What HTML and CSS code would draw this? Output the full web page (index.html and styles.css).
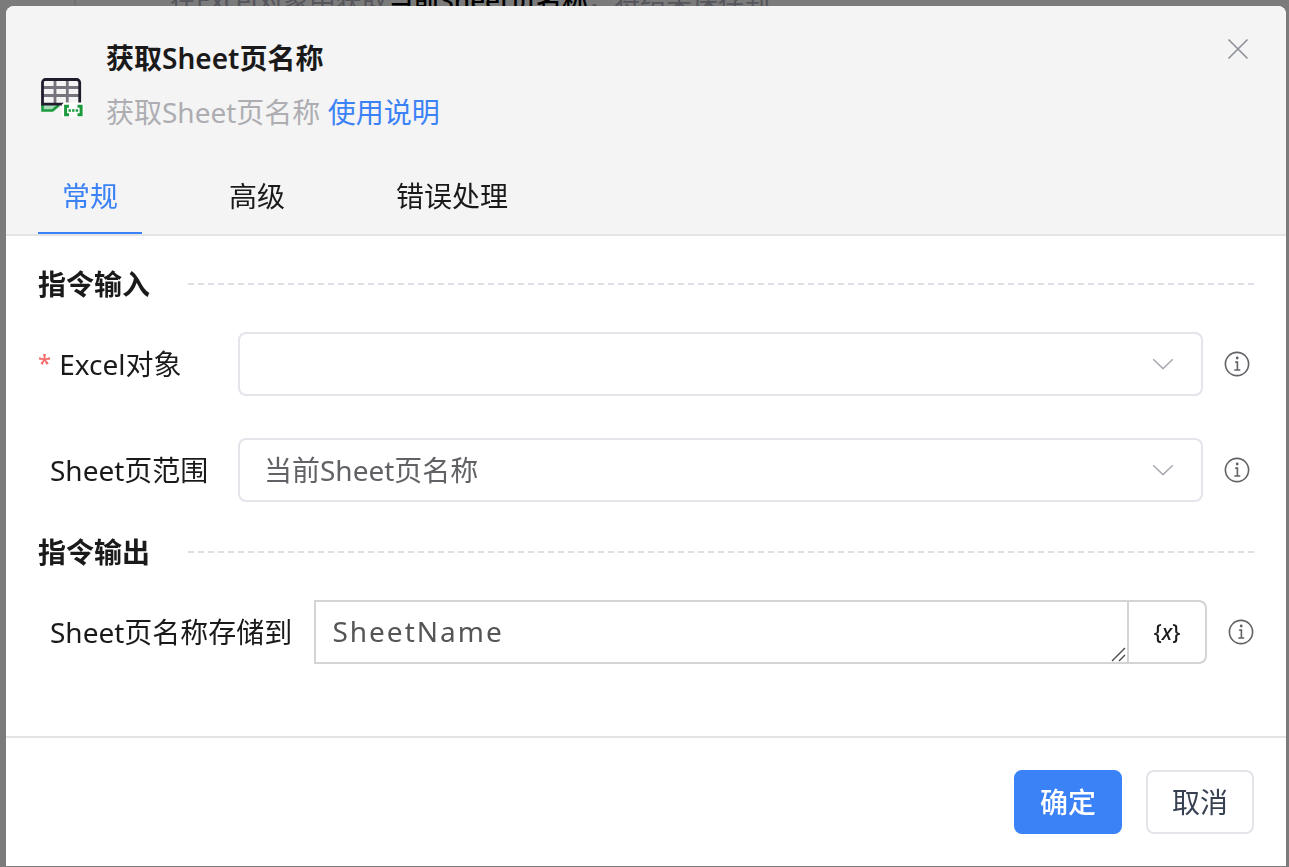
FILE: index.html
```html
<!DOCTYPE html>
<html lang="zh-CN">
<head>
<meta charset="utf-8">
<title>获取Sheet页名称</title>
<link rel="stylesheet" href="styles.css">
</head>
<body>
<svg class="sprite" aria-hidden="true">
  <symbol id="info" viewBox="0 0 26 26">
    <circle cx="13" cy="13" r="11.6" fill="none" stroke="currentColor" stroke-width="1.6"/>
    <circle cx="13.2" cy="7" r="1.4" fill="currentColor"/>
    <path d="M11.2 11.1h2.2v7.8M10.3 19h6" fill="none" stroke="currentColor" stroke-width="1.6"/>
  </symbol>
  <symbol id="chevron" viewBox="0 0 22 12">
    <path d="M1.2 1.2 11 10.6 20.8 1.2" fill="none" stroke="currentColor" stroke-width="1.5"/>
  </symbol>
</svg>

<div class="flow">
  <div class="flow-gutter"></div>
  <p class="flow-step">在Excel对象中获取<b>当前Sheet页名称</b>，将结果保存到</p>
</div>

<div class="overlay">
  <form class="dialog" role="dialog" aria-labelledby="dialog-title">
    <header class="dialog-header">
      <div class="heading">
        <svg class="command-icon" viewBox="0 0 44 40" aria-hidden="true">
          <path d="M2.500 27v6.500H12.500L19 28" fill="#a9dcb8" stroke="#1a9a3c" stroke-width="2.600"/>
          <path d="M3 3h36v24H3z" fill="#f4f4f4"/>
          <path d="M3 10.500h36M3 18.500h36M15 3v24M27.300 3v24" fill="none" stroke="#78727d" stroke-width="2.800"/>
          <path d="M39.700 26V5.500a3 3 0 0 0-3-3H5.500a3 3 0 0 0-3 3v21.700h21" fill="none" stroke="#211c2c" stroke-width="2.800"/>
          <path d="M24 25.500h18l2 2V40H22V27.500z" fill="#fff"/>
          <path d="M29 29.300h-3.400v8.400H29M37.500 29.300h3.600v8.400h-3.600" fill="none" stroke="#1a9a3c" stroke-width="3"/>
          <path d="M28.500 33.500h2.400M32.100 33.500h2.400M35.700 33.500h2.400" stroke="#1a9a3c" stroke-width="2.600"/>
        </svg>
        <div class="heading-text">
          <h1 id="dialog-title">获取Sheet页名称</h1>
          <p>获取Sheet页名称 <a href="#help">使用说明</a></p>
        </div>
        <button class="close" type="button" aria-label="关闭">
          <svg viewBox="0 0 22 22"><path d="m1.500 1.500 19 19m0-19-19 19" fill="none" stroke="currentColor" stroke-width="1.600"/></svg>
        </button>
      </div>
      <nav class="tabs" role="tablist">
        <button class="tab active" type="button" role="tab" aria-selected="true">常规</button>
        <button class="tab" type="button" role="tab" aria-selected="false">高级</button>
        <button class="tab" type="button" role="tab" aria-selected="false">错误处理</button>
      </nav>
    </header>

    <main class="dialog-body">
      <h2>指令输入</h2>
      <div class="fields">
        <div class="field">
          <label class="required" for="excel">Excel对象</label>
          <div class="select">
            <select id="excel" required><option value=""></option></select>
            <svg><use href="#chevron"/></svg>
          </div>
          <svg class="info"><use href="#info"/></svg>
        </div>
        <div class="field">
          <label for="scope">Sheet页范围</label>
          <div class="select">
            <select id="scope"><option>当前Sheet页名称</option></select>
            <svg><use href="#chevron"/></svg>
          </div>
          <svg class="info"><use href="#info"/></svg>
        </div>
      </div>
      <h2>指令输出</h2>
      <div class="field output">
        <label for="target">Sheet页名称存储到</label>
        <div class="variable">
          <textarea id="target" rows="1">SheetName</textarea>
          <svg class="grip" viewBox="0 0 16 16" aria-hidden="true"><path d="M1 15 14 2M8 15l6-6" stroke="#4a4a4a" stroke-width="1.400"/></svg>
          <button type="button" aria-label="插入变量">{<i>x</i>}</button>
        </div>
        <svg class="info"><use href="#info"/></svg>
      </div>
    </main>

    <footer class="dialog-footer">
      <button class="primary" type="submit">确定</button>
      <button type="button">取消</button>
    </footer>
  </form>
</div>
</body>
</html>
```
FILE: styles.css
```css
* { box-sizing: border-box; }

body,
button,
select,
textarea {
  font-family: "Noto Sans", "Noto Sans CJK SC", sans-serif;
  font-size: 28px;
  line-height: 40px;
}

body {
  margin: 0;
  min-height: 100vh;
  overflow: hidden;
  background: #7b7b7b;
  color: #1a1a1a;
}

h1, h2, p { margin: 0; }

button {
  margin: 0;
  padding: 0;
  border: 0;
  background: none;
  color: inherit;
  cursor: pointer;
}

.sprite { position: absolute; width: 0; height: 0; }

.flow {
  display: flex;
  margin-top: -20px;
  color: #55555c;
}

.flow-gutter {
  width: 76px;
  margin-right: 94px;
  border-right: 2px solid #727272;
}

.flow-step { font-size: 26px; white-space: nowrap; }

.flow-step b { color: #000; font-weight: 500; }

.overlay {
  position: fixed;
  inset: 0;
  display: flex;
  padding: 6px 3px 1px 6px;
}

.dialog {
  flex: 1;
  display: flex;
  flex-direction: column;
  overflow: hidden;
  border-radius: 8px 8px 0 0;
  background: #fff;
}

.dialog-header {
  padding: 32px 32px 0;
  border-bottom: 2px solid #e4e4e4;
  background: #f4f4f4;
}

.heading { display: flex; }

.command-icon {
  width: 44px;
  height: 40px;
  margin: 39px 22px 0 2px;
}

.heading-text {
  flex: 1;
  display: grid;
  gap: 14px;
}

h1 {
  font-size: 28px;
  line-height: 40px;
  font-weight: 600;
}

.heading p { color: #adadb2; }

a { color: #3b82f6; text-decoration: none; }

.close {
  display: flex;
  align-self: flex-start;
  padding: 0 5px;
  color: #8d8f98;
}

.close svg { width: 22px; height: 22px; }

.tabs {
  display: flex;
  gap: 63px;
  margin-top: 28px;
}

.tab {
  padding: 16px 24px;
  border-bottom: 2px solid transparent;
}

.tab.active { border-color: #3b82f6; color: #3b82f6; }

.dialog-body { flex: 1; padding: 28px 32px; }

h2 {
  display: flex;
  align-items: center;
  gap: 38px;
  margin-bottom: 28px;
  font-size: 28px;
  line-height: 40px;
  font-weight: 700;
}

h2::after {
  content: "";
  flex: 1;
  border-top: 2px dashed #dcdfe6;
}

.fields {
  display: grid;
  gap: 42px;
  margin-bottom: 30px;
}

.field { display: flex; align-items: center; }

.fields .field { padding-right: 4px; }

.fields label { width: 200px; }

label { padding-left: 12px; white-space: nowrap; }

label.required { padding-left: 0; }

.required::before {
  content: "*";
  margin-right: 8px;
  color: #f56c6c;
  font-size: 24px;
  font-weight: 500;
  vertical-align: 3px;
  line-height: 24px;
}

.output label { margin-right: 22px; }

.select {
  flex: 1;
  display: grid;
  align-items: center;
}

.select > * { grid-area: 1 / 1; }

.select select {
  appearance: none;
  width: 100%;
  height: 64px;
  padding: 0 64px 0 24px;
  border: 2px solid #e4e4eb;
  border-radius: 8px;
  background: #fff;
  color: #606266;
}

.select svg {
  justify-self: end;
  width: 22px;
  height: 12px;
  margin-right: 29px;
  color: #a8abb2;
  pointer-events: none;
}

.info {
  flex: none;
  width: 26px;
  height: 26px;
  margin-left: 21px;
  color: #606266;
}

.variable {
  flex: 1;
  display: grid;
  grid-template-columns: 1fr 78px;
  height: 64px;
  border: 2px solid #d4d4d4;
  border-radius: 0 8px 8px 0;
}

.variable textarea {
  grid-area: 1 / 1;
  width: 100%;
  height: 60px;
  padding: 9px 16px;
  border: 0;
  outline: 0;
  background: none;
  color: #555;
  letter-spacing: 2px;
  resize: none;
}

.grip {
  grid-area: 1 / 1;
  place-self: end;
  width: 16px;
  height: 16px;
  pointer-events: none;
}

.variable button {
  border-left: 2px solid #d4d4d4;
  font-size: 21px;
  font-weight: 500;
}

.dialog-footer {
  display: flex;
  justify-content: flex-end;
  gap: 24px;
  padding: 32px;
  border-top: 2px solid #e4e4e4;
}

.dialog-footer button {
  height: 64px;
  padding: 0 24px;
  border: 2px solid #e4e4eb;
  border-radius: 8px;
  color: #374151;
}

.dialog-footer .primary {
  border-color: #3b82f6;
  background: #3b82f6;
  color: #fff;
  font-weight: 500;
}
```
